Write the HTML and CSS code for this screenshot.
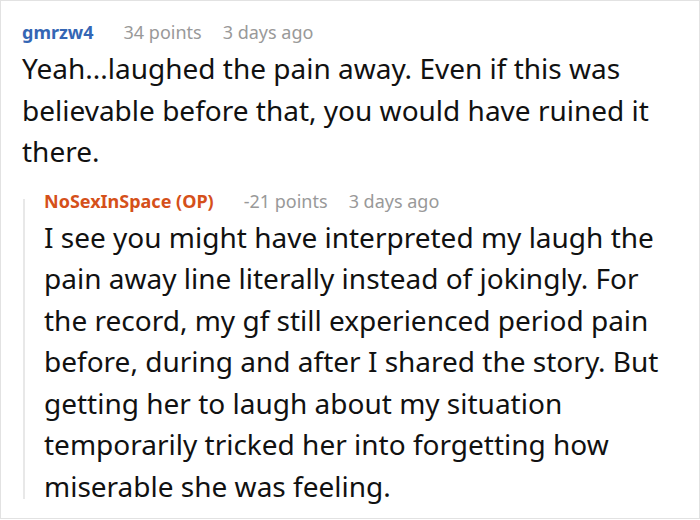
FILE: index.html
```html
<!DOCTYPE html>
<html>
<head>
<meta charset="utf-8">
<link rel="stylesheet" href="styles.css">
</head>
<body>
<div class="frame">
  <div class="comment">
    <div class="meta">
      <span class="author">gmrzw4</span>
      <span class="info">34 points</span>
      <span class="info">3 days ago</span>
    </div>
    <p class="body">Yeah...laughed the pain away. Even if this was believable before that, you would have ruined it there.</p>
    <div class="reply">
      <div class="meta">
        <span class="author op">NoSexInSpace (OP)</span>
        <span class="info">-21 points</span>
        <span class="info">3 days ago</span>
      </div>
      <p class="body">I see you might have interpreted my laugh the pain away line literally instead of jokingly. For the record, my gf still experienced period pain before, during and after I shared the story. But getting her to laugh about my situation temporarily tricked her into forgetting how miserable she was feeling.</p>
    </div>
  </div>
</div>
</body>
</html>
```
FILE: styles.css
```css
html, body {
  margin: 0;
  padding: 0;
  background: #fff;
}
.frame {
  box-sizing: border-box;
  width: 700px;
  height: 519px;
  border: 1px solid #e2e2e2;
  font-family: "Noto Sans", "Open Sans", sans-serif;
  overflow: hidden;
}
.comment {
  padding: 19px 20px 0 21px;
}
.meta {
  display: flex;
  gap: 21px;
  font-size: 18px;
  line-height: 24px;
}
.author {
  font-weight: 700;
  color: #3466b4;
  margin-right: 9px;
}
.author.op {
  color: #d5501a;
}
.info {
  color: #999;
}
.body {
  margin: 4px 0 0 0;
  font-size: 28px;
  line-height: 41.5px;
  color: #111;
}
.reply {
  position: relative;
  margin-top: 16px;
  padding-left: 22px;
}
.reply::before {
  content: "";
  position: absolute;
  left: 1px;
  top: 10px;
  bottom: 8px;
  width: 2px;
  background: #e8e8e8;
}
```
